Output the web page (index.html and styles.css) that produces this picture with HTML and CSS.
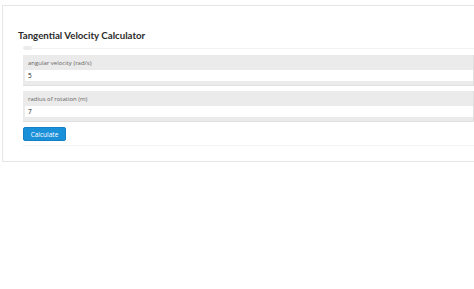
FILE: index.html
```html
<!DOCTYPE html>
<html>
<head>
<meta charset="utf-8">
<link rel="stylesheet" href="styles.css">
</head>
<body>
<div class="card">
  <h1 class="title">Tangential Velocity Calculator</h1>
  <div class="form">
    <div class="legend"></div>
    <div class="group">
      <label class="label">angular velocity (rad/s)</label>
      <div class="input">5</div>
    </div>
    <div class="group">
      <label class="label">radius of rotation (m)</label>
      <div class="input">7</div>
    </div>
    <button class="btn">Calculate</button>
  </div>
</div>
</body>
</html>
```
FILE: styles.css
```css
html, body { margin: 0; padding: 0; background: #fff; overflow: hidden; }
body { padding: 5px 0 0 2px; font-family: "Open Sans", "Noto Sans", sans-serif; color: #333; }
.card {
  width: 520px;
  border: 1px solid #e6e6e6;
  padding: 22px 0 15px 15px;
  box-sizing: border-box;
}
.title { margin: 0 0 6px 0; font-family: Lato, "Open Sans", sans-serif; font-size: 9.7px; font-weight: 700; line-height: 14px; color: #2b2b2b; }
.form {
  margin-left: 5px;
  width: 451px;
  border-top: 1px solid #f2f2f2;
  border-bottom: 1px solid #f2f2f2;
  position: relative;
  padding: 6px 0 4px 0;
}
.legend { position: absolute; left: 0; top: -3px; width: 9px; height: 4px; background: #ececec; border-radius: 2px; }
.group {
  background: #ebebeb;
  border-bottom: 1px solid #e0e0e0;
  border-right: 1px solid #e0e0e0;
  padding: 4px 0 4px 2px;
  margin-bottom: 5px;
}
.label { display: block; font-size: 6px; color: #666; line-height: 9px; padding: 0 0 2px 3px; }
.input { background: #fff; height: 11px; line-height: 11px; font-size: 6.5px; color: #222; padding-left: 3px; }
.btn {
  display: block;
  margin-top: 1px;
  background: #1a90d9;
  color: #fff;
  border: 1px solid #1680c4;
  border-radius: 2px;
  font-family: "Open Sans", sans-serif;
  font-size: 6.5px;
  width: 43px;
  height: 14px;
  padding: 0;
}
```
